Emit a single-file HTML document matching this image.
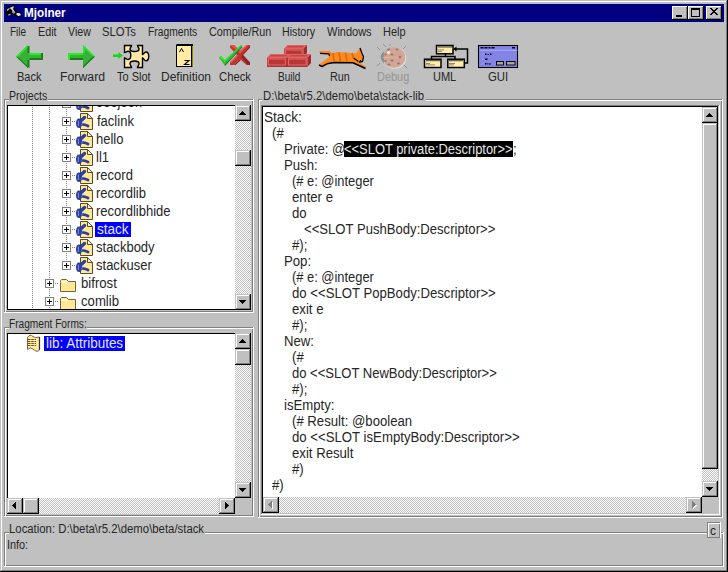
<!DOCTYPE html>
<html><head><meta charset="utf-8"><title>Mjolner</title>
<style>
html,body{margin:0;padding:0;}
body{width:728px;height:572px;overflow:hidden;position:relative;background:#c0c0c0;font-family:"Liberation Sans", sans-serif;}
body div, body svg{position:absolute;}
.t{white-space:pre;font-family:"Liberation Sans", sans-serif;}
svg{overflow:visible;}
</style></head><body>
<div style="left:0px;top:0px;width:728px;height:572px;background:#c0c0c0;"></div>
<div style="left:1px;top:1px;width:726px;height:1px;background:#fff;"></div>
<div style="left:1px;top:1px;width:1px;height:570px;background:#fff;"></div>
<div style="left:0px;top:571px;width:728px;height:1px;background:#000;"></div>
<div style="left:727px;top:0px;width:1px;height:572px;background:#000;"></div>
<div style="left:1px;top:570px;width:726px;height:1px;background:#808080;"></div>
<div style="left:726px;top:1px;width:1px;height:570px;background:#808080;"></div>
<div style="left:4px;top:4px;width:720px;height:18px;background:#000080;"></div>
<div class="t" style="left:24.02px;top:7px;font-size:12px;line-height:12px;color:#fff;font-weight:bold;transform:scaleX(0.9756);transform-origin:0 0;">Mjolner</div>
<div style="left:672px;top:6px;width:16px;height:14px;background:#c0c0c0;"></div>
<div style="left:672px;top:6px;width:16px;height:1px;background:#fff;"></div>
<div style="left:672px;top:6px;width:1px;height:14px;background:#fff;"></div>
<div style="left:672px;top:19px;width:16px;height:1px;background:#000;"></div>
<div style="left:687px;top:6px;width:1px;height:14px;background:#000;"></div>
<div style="left:673px;top:18px;width:14px;height:1px;background:#808080;"></div>
<div style="left:686px;top:7px;width:1px;height:12px;background:#808080;"></div>
<div style="left:688px;top:6px;width:16px;height:14px;background:#c0c0c0;"></div>
<div style="left:688px;top:6px;width:16px;height:1px;background:#fff;"></div>
<div style="left:688px;top:6px;width:1px;height:14px;background:#fff;"></div>
<div style="left:688px;top:19px;width:16px;height:1px;background:#000;"></div>
<div style="left:703px;top:6px;width:1px;height:14px;background:#000;"></div>
<div style="left:689px;top:18px;width:14px;height:1px;background:#808080;"></div>
<div style="left:702px;top:7px;width:1px;height:12px;background:#808080;"></div>
<div style="left:706px;top:6px;width:16px;height:14px;background:#c0c0c0;"></div>
<div style="left:706px;top:6px;width:16px;height:1px;background:#fff;"></div>
<div style="left:706px;top:6px;width:1px;height:14px;background:#fff;"></div>
<div style="left:706px;top:19px;width:16px;height:1px;background:#000;"></div>
<div style="left:721px;top:6px;width:1px;height:14px;background:#000;"></div>
<div style="left:707px;top:18px;width:14px;height:1px;background:#808080;"></div>
<div style="left:720px;top:7px;width:1px;height:12px;background:#808080;"></div>
<div style="left:676px;top:15px;width:6px;height:2px;background:#000;"></div>
<div style="left:691px;top:8px;width:9px;height:1px;background:#000;"></div>
<div style="left:691px;top:8px;width:1px;height:9px;background:#000;"></div>
<div style="left:691px;top:16px;width:9px;height:1px;background:#000;"></div>
<div style="left:699px;top:8px;width:1px;height:9px;background:#000;"></div>
<div style="left:691px;top:9px;width:9px;height:1px;background:#000;"></div>
<svg style="left:710px;top:8px" width="8" height="7"><path d="M0 0h2v1h1v1h2v-1h1v-1h2v1h-1v1h-1v1h-1v1h1v1h1v1h1v1h-2v-1h-1v-1h-2v1h-1v1h-2v-1h1v-1h1v-1h1v-1h-1v-1h-1v-1h-1z" fill="#000"/></svg>
<div class="t" style="left:10.17px;top:26px;font-size:12px;line-height:12px;color:#262626;transform:scaleX(0.8333);transform-origin:0 0;">File</div>
<div class="t" style="left:38.11px;top:26px;font-size:12px;line-height:12px;color:#262626;transform:scaleX(0.8947);transform-origin:0 0;">Edit</div>
<div class="t" style="left:68.00px;top:26px;font-size:12px;line-height:12px;color:#262626;transform:scaleX(0.8846);transform-origin:0 0;">View</div>
<div class="t" style="left:102.06px;top:26px;font-size:12px;line-height:12px;color:#262626;transform:scaleX(0.9429);transform-origin:0 0;">SLOTs</div>
<div class="t" style="left:148.14px;top:26px;font-size:12px;line-height:12px;color:#262626;transform:scaleX(0.8571);transform-origin:0 0;">Fragments</div>
<div class="t" style="left:209.10px;top:26px;font-size:12px;line-height:12px;color:#262626;transform:scaleX(0.8971);transform-origin:0 0;">Compile/Run</div>
<div class="t" style="left:282.11px;top:26px;font-size:12px;line-height:12px;color:#262626;transform:scaleX(0.8889);transform-origin:0 0;">History</div>
<div class="t" style="left:327.00px;top:26px;font-size:12px;line-height:12px;color:#262626;transform:scaleX(0.9167);transform-origin:0 0;">Windows</div>
<div class="t" style="left:383.09px;top:26px;font-size:12px;line-height:12px;color:#262626;transform:scaleX(0.9130);transform-origin:0 0;">Help</div>
<div class="t" style="left:17.08px;top:71px;font-size:12px;line-height:12px;color:#262626;transform:scaleX(0.9200);transform-origin:0 0;">Back</div>
<div class="t" style="left:59.98px;top:71px;font-size:12px;line-height:12px;color:#262626;transform:scaleX(1.0238);transform-origin:0 0;">Forward</div>
<div class="t" style="left:117.00px;top:71px;font-size:12px;line-height:12px;color:#262626;transform:scaleX(0.9167);transform-origin:0 0;">To Slot</div>
<div class="t" style="left:161.00px;top:71px;font-size:12px;line-height:12px;color:#262626;">Definition</div>
<div class="t" style="left:219.06px;top:71px;font-size:12px;line-height:12px;color:#262626;transform:scaleX(0.9394);transform-origin:0 0;">Check</div>
<div class="t" style="left:278.16px;top:71px;font-size:12px;line-height:12px;color:#262626;transform:scaleX(0.8400);transform-origin:0 0;">Build</div>
<div class="t" style="left:330.10px;top:71px;font-size:12px;line-height:12px;color:#262626;transform:scaleX(0.9000);transform-origin:0 0;">Run</div>
<div class="t" style="left:377.09px;top:71px;font-size:12px;line-height:12px;color:#959595;transform:scaleX(0.9118);transform-origin:0 0;">Debug</div>
<div class="t" style="left:433.08px;top:71px;font-size:12px;line-height:12px;color:#262626;transform:scaleX(0.9167);transform-origin:0 0;">UML</div>
<div class="t" style="left:488.05px;top:71px;font-size:12px;line-height:12px;color:#262626;transform:scaleX(0.9474);transform-origin:0 0;">GUI</div>
<svg style="left:0;top:0" width="728" height="100" viewBox="0 0 728 100">
<!-- Back arrow -->
<g>
<polygon points="16,56.5 28,45 28,53 43,53 43,60 28,60 28,68" fill="#36b236"/>
<polygon points="16,56.5 28,45 28,47.2 18.3,56.5" fill="#22f022"/>
<polygon points="29.5,53 43,53 43,55 29.5,55" fill="#22f022"/>
<polygon points="27.5,46.5 29.5,45.8 29.5,53 27.5,53" fill="#1f7a1f"/>
<polygon points="27.5,60 29.5,60 29.5,68 27.5,67" fill="#1f7a1f"/>
<polygon points="41,53 43,53 43,60 41,60" fill="#1f7a1f"/>
<polygon points="29.5,58 43,58 43,60 29.5,60" fill="#1f7a1f"/>
<polygon points="16.5,57 18,57 28,66.5 28,68" fill="#1f7a1f"/>
</g>
<!-- Forward arrow -->
<g>
<polygon points="68,53 83,53 83,45 95,56.5 83,68 83,60 68,60" fill="#36b236"/>
<polygon points="68,53 83,53 83,55 70,55 70,60 68,60" fill="#22f022"/>
<polygon points="83,45 84.8,46.7 84.8,53 83,53" fill="#22f022"/>
<polygon points="84.8,46.7 95,56.5 93,56.5 84.8,48.8" fill="#22f022"/>
<polygon points="70,58 83,58 83,60 70,60" fill="#1f7a1f"/>
<polygon points="83,66 93.2,56.5 95,56.5 83,68" fill="#1f7a1f"/>
</g>
<!-- To Slot -->
<g>
<polygon points="113,54 118.5,54 118.5,52 123,55.5 118.5,59 118.5,57 113,57" fill="#20d020"/>
<polygon points="113,54 118.5,54 118.5,55 113,55" fill="#30f030"/>
<path d="M124.5,45.5 H131.5 C131.5,47 130,47.5 130,49 C130,51 132,51.5 134.5,51.5 C137,51.5 139,51 139,49 C139,47.5 137.5,47 137.5,45.5 H142.5 V54.5 C144,54.5 144,52 146,52 C148,52 148.7,54 148.7,56.3 C148.7,58.6 148,60.8 146,60.8 C144,60.8 144,58 142.5,58 V67.5 H137.5 C137.5,66 139,65.5 139,63.5 C139,61.5 137,61 134.5,61 C132,61 130,61.5 130,63.5 C130,65.5 131.5,66 131.5,67.5 H124.5 V58 C126,58 126.5,59.5 128,59.5 C130,59.5 130.8,57.5 130.8,55.3 C130.8,53 130,51.2 128,51.2 C126.5,51.2 126,52.5 124.5,52.5 Z" fill="#feeaa6" stroke="#000" stroke-width="1.4"/>
</g>
<!-- Definition book -->
<g>
<path d="M176,45 L177,44 H193 V66 L192,67 H176 Z" fill="#000"/>
<rect x="177" y="46" width="14" height="20" fill="#ffeba3"/>
<rect x="192" y="46" width="1" height="20" fill="#8a8a00"/>
<path d="M179.5,52 L181.5,48.5 L183.5,52" fill="none" stroke="#000" stroke-width="1"/>
<path d="M184.5,60.5 H189 L184.5,64.5 H189.5" fill="none" stroke="#000" stroke-width="1.1"/>
</g>
<!-- Check -->
<g>
<polygon points="230,45 234,45 240,51 246.5,45 250,45 250,47.5 243,55 250,62.5 250,65 246.5,65 240,59 234,65 230,65 230,62.5 237,55 230,47.5" fill="#be3434"/>
<polygon points="230,45 234,45 240,51 246.5,45 248.5,45 240,53.5 231,45.8 230,47.5" fill="#f04c4c"/>
<polygon points="230,62.5 237,55 238,56 231.5,63" fill="#f04c4c"/>
<polygon points="250,45 250,47.5 243,55 250,62.5 250,65 248,65 241.5,57.5 242,55 249,47" fill="#8e2222"/>
<polygon points="234,65 240,59 241,60 235.5,65" fill="#8e2222"/>
<polygon points="219,57.5 221,56 224.5,60.5 241,45 242.2,46.2 224.5,65" fill="#30b830"/>
<polygon points="219,57 221,55.8 224.3,59.8 223.5,61" fill="#22ee22"/>
<polygon points="223.5,61.5 241,45 241.6,45.6 224.3,62.5" fill="#22ee22"/>
<polygon points="224.5,65 242.2,46.2 242.2,47.6 225,66" fill="#1a701a"/>
</g>
<!-- Build bricks -->
<g>
<polygon points="284,48.5 287.5,45 307,45 303.5,48.5" fill="#e66262"/>
<polygon points="286,47.5 288,46 304,46 302.5,47.5" fill="#c44444"/>
<polygon points="303.5,48.5 307,45 307,53 303.5,56.5" fill="#a22a2a"/>
<rect x="284" y="48.5" width="19.5" height="8" fill="#cc4444"/>
<rect x="285.5" y="50" width="16.5" height="5" fill="#b83636" stroke="#e86464" stroke-width="1"/>
<rect x="284" y="55.8" width="19.5" height="0.9" fill="#982424"/>
<polygon points="267,57.5 270.5,54 290.5,54 287,57.5" fill="#e66262"/>
<polygon points="269,56.5 271,55 287.5,55 286,56.5" fill="#c44444"/>
<rect x="267" y="57.5" width="20" height="9.2" fill="#cc4444"/>
<rect x="268.5" y="59" width="17" height="6" fill="#b83636" stroke="#e86464" stroke-width="1"/>
<polygon points="287,57.5 290.5,54 311,54 307.5,57.5" fill="#e66262"/>
<polygon points="289,56.5 291,55 308,55 306.5,56.5" fill="#c44444"/>
<polygon points="307.5,57.5 311,54 311,63 307.5,66.7" fill="#a22a2a"/>
<rect x="287" y="57.5" width="20.5" height="9.2" fill="#cc4444"/>
<rect x="288.5" y="59" width="17.5" height="6" fill="#b83636" stroke="#e86464" stroke-width="1"/>
<rect x="267" y="65.8" width="40.5" height="0.9" fill="#982424"/>
<line x1="287" y1="57.5" x2="287" y2="66.5" stroke="#982424" stroke-width="1"/>
</g>
<!-- Run cat -->
<g>
<polygon points="319,51 330,51 332,53.3 337,52 348,52.8 356,53.2 360,48 362,53.5 363.5,56.5 362.6,61.5 359,62 366,67 365.5,68.5 353,62.5 334,62 327,63.5 322,66.5 319,64.5 328.5,57.5 329.5,55 320,53.5" fill="#ff8a1c"/>
<g fill="none" stroke="#000" stroke-linejoin="round">
<polyline points="320,53.3 329,53.8 329.6,56" stroke-width="1.2"/>
<polyline points="319,65 322,66.5 327,63.8 334,62.5 353,62.8 365.5,68.5" stroke-width="1.5"/>
<polyline points="360,48 362,53.5 363.5,56.5 362.6,61.5 359,62" stroke-width="1.3"/>
<polyline points="353.5,58 358.5,61.5" stroke-width="1.1"/>
</g>
<path d="M333,53 L334,61.5 M339,52.3 L340.5,62 M345.5,52.6 L347,62 M352,53 L353.5,58" stroke="#d86a10" stroke-width="1.7"/>
<rect x="360" y="60" width="1.2" height="1.2" fill="#000"/>
</g>
<!-- Debug ladybug (disabled) -->
<g>
<line x1="386" y1="47" x2="383" y2="44" stroke="#909090" stroke-width="1"/>
<line x1="380" y1="50" x2="377" y2="47" stroke="#909090" stroke-width="1"/>
<line x1="380" y1="63" x2="377" y2="66" stroke="#909090" stroke-width="1"/>
<line x1="403" y1="49" x2="406" y2="46" stroke="#909090" stroke-width="1"/>
<line x1="404" y1="65" x2="407" y2="68" stroke="#909090" stroke-width="1"/>
<line x1="390" y1="46" x2="390" y2="44" stroke="#909090" stroke-width="1"/>
<ellipse cx="394.8" cy="58" rx="11.5" ry="10.8" fill="#dcdcdc"/>
<ellipse cx="394" cy="57.3" rx="11.2" ry="10.4" fill="#d4a494"/>
<path d="M384,51 Q377,57 384,63.5 Z" fill="#909090"/>
<line x1="383" y1="57.5" x2="405" y2="57.5" stroke="#e0b090" stroke-width="1"/>
<circle cx="388.5" cy="52.5" r="1.5" fill="#f0f0e8"/>
<g fill="#808080">
<ellipse cx="388.5" cy="49.5" rx="1.6" ry="0.9"/>
<ellipse cx="397" cy="49.5" rx="1.4" ry="0.9"/>
<ellipse cx="385.5" cy="54.5" rx="1.2" ry="1"/>
<ellipse cx="392" cy="54.5" rx="1.6" ry="1"/>
<ellipse cx="400" cy="57" rx="1.4" ry="1.2"/>
<ellipse cx="385.5" cy="61" rx="1.2" ry="1"/>
<ellipse cx="392" cy="60.5" rx="1.6" ry="1"/>
<ellipse cx="389" cy="64.5" rx="1.6" ry="0.9"/>
<ellipse cx="398.5" cy="63.5" rx="1.5" ry="0.9"/>
</g>
</g>
<!-- UML -->
<g stroke="#000" stroke-width="1.5" fill="#ffeca6">
<path d="M445.5,54 V56.5 M431.5,59 V56.5 H455 V59" fill="none"/>
<path d="M464,63 H467.5 V49 H454" fill="none"/>
<rect x="436.5" y="45.5" width="16.5" height="8.3"/>
<rect x="424.5" y="59.2" width="16.5" height="8.3"/>
<rect x="447.8" y="59.2" width="16.5" height="8.3"/>
</g>
<polygon points="453.5,49 456.5,46.5 456.5,51.5" fill="#000"/>
<g fill="#707070">
<rect x="438" y="46.5" width="14" height="1" fill="#404040"/>
<rect x="438" y="49.5" width="6" height="0.8"/><rect x="438" y="51" width="4" height="0.8"/>
<rect x="426" y="60.2" width="14" height="1" fill="#404040"/>
<rect x="426" y="63" width="4" height="0.8"/><rect x="426" y="64.5" width="9" height="0.8"/>
<rect x="449" y="60.2" width="14" height="1" fill="#404040"/>
<rect x="449" y="63" width="6" height="0.8"/><rect x="449" y="64.5" width="5" height="0.8"/>
</g>
<!-- GUI -->
<g>
<rect x="478.5" y="45.5" width="39" height="22" fill="#8484e6" stroke="#000" stroke-width="1.1"/>
<rect x="479.5" y="49.8" width="38" height="0.9" fill="#b0b0ff"/>
<g fill="#000">
<rect x="480.5" y="47" width="3" height="1.5"/><rect x="484.5" y="47" width="3" height="1.5"/><rect x="488.5" y="47" width="2" height="1.5"/><rect x="491.5" y="47" width="3" height="1.5"/><rect x="512" y="47" width="3" height="1.5"/>
<rect x="485" y="53.5" width="1.5" height="1.5"/><rect x="487.5" y="54" width="1.5" height="0.8"/><rect x="490" y="53.5" width="1.5" height="1.5"/>
<rect x="485" y="58.5" width="2.5" height="1.5"/>
<rect x="485" y="63" width="1.5" height="1.5"/><rect x="487.5" y="63" width="0.8" height="1.5"/><rect x="489" y="63.5" width="2" height="1"/>
</g>
<g fill="none" stroke="#a8a8f0" stroke-width="0.9">
<path d="M481.5,55 L483.5,53.5"/><path d="M481.5,60 L483.5,58.5"/><path d="M481.5,64.5 L483.5,63"/>
</g>
<rect x="496.5" y="61.5" width="7" height="3.5" fill="#a8a890" stroke="#000" stroke-width="0.9"/>
<rect x="506.5" y="61.5" width="8.5" height="3.5" fill="#a8a890" stroke="#000" stroke-width="0.9"/>
</g>
<!-- title icon -->
<g>
<polygon points="6,9.5 9,7 12.5,5.5 15,5.5 14.5,8.5 17.5,12 20.5,12.5 22,15.5 19,17 16.5,16.5 14,14.5 11,15 7.5,16.5 6,14" fill="#000"/>
<polygon points="7,9.5 9.5,8 9.5,9 7.5,11" fill="#e0e0e0"/>
<polygon points="9.5,8 12.5,6.5 14,6.5 13,9 15.5,12.5 13.5,13 11.5,9.5" fill="#d8d8d8"/>
<polygon points="12.5,10 15,12.5 14,14 12,13" fill="#909090"/>
<polygon points="8,14.5 10.5,13.5 10.5,15 8.5,15.8" fill="#a0a0a0"/>
<polygon points="16.5,13 20,13.3 21,15.3 18.5,16 16.5,15" fill="#e8e8e8"/>
</g>
</svg>

<div style="left:4px;top:99px;width:249px;height:1px;background:#808080;"></div>
<div style="left:4px;top:99px;width:1px;height:213px;background:#808080;"></div>
<div style="left:4px;top:311px;width:249px;height:1px;background:#808080;"></div>
<div style="left:252px;top:99px;width:1px;height:213px;background:#808080;"></div>
<div style="left:5px;top:100px;width:249px;height:1px;background:#fff;"></div>
<div style="left:5px;top:100px;width:1px;height:213px;background:#fff;"></div>
<div style="left:4px;top:312px;width:250px;height:1px;background:#fff;"></div>
<div style="left:253px;top:99px;width:1px;height:214px;background:#fff;"></div>
<div style="left:9px;top:99px;width:39px;height:2px;background:#c0c0c0;"></div>
<div class="t" style="left:9.12px;top:90px;font-size:12px;line-height:12px;color:#262626;transform:scaleX(0.8810);transform-origin:0 0;">Projects</div>
<div style="left:8px;top:106px;width:243px;height:203px;background:#fff;"></div>
<div style="left:7px;top:105px;width:244px;height:1px;background:#000;"></div>
<div style="left:7px;top:105px;width:1px;height:205px;background:#000;"></div>
<div style="left:7px;top:309px;width:244px;height:1px;background:#000;"></div>
<div style="left:8px;top:106px;width:227px;height:203px;overflow:hidden;">
<svg style="left:0;top:0" width="227" height="203"><path fill="#808080" d="M24 1h1v1h-1zM24 3h1v1h-1zM24 5h1v1h-1zM24 7h1v1h-1zM24 9h1v1h-1zM24 11h1v1h-1zM24 13h1v1h-1zM24 15h1v1h-1zM24 17h1v1h-1zM24 19h1v1h-1zM24 21h1v1h-1zM24 23h1v1h-1zM24 25h1v1h-1zM24 27h1v1h-1zM24 29h1v1h-1zM24 31h1v1h-1zM24 33h1v1h-1zM24 35h1v1h-1zM24 37h1v1h-1zM24 39h1v1h-1zM24 41h1v1h-1zM24 43h1v1h-1zM24 45h1v1h-1zM24 47h1v1h-1zM24 49h1v1h-1zM24 51h1v1h-1zM24 53h1v1h-1zM24 55h1v1h-1zM24 57h1v1h-1zM24 59h1v1h-1zM24 61h1v1h-1zM24 63h1v1h-1zM24 65h1v1h-1zM24 67h1v1h-1zM24 69h1v1h-1zM24 71h1v1h-1zM24 73h1v1h-1zM24 75h1v1h-1zM24 77h1v1h-1zM24 79h1v1h-1zM24 81h1v1h-1zM24 83h1v1h-1zM24 85h1v1h-1zM24 87h1v1h-1zM24 89h1v1h-1zM24 91h1v1h-1zM24 93h1v1h-1zM24 95h1v1h-1zM24 97h1v1h-1zM24 99h1v1h-1zM24 101h1v1h-1zM24 103h1v1h-1zM24 105h1v1h-1zM24 107h1v1h-1zM24 109h1v1h-1zM24 111h1v1h-1zM24 113h1v1h-1zM24 115h1v1h-1zM24 117h1v1h-1zM24 119h1v1h-1zM24 121h1v1h-1zM24 123h1v1h-1zM24 125h1v1h-1zM24 127h1v1h-1zM24 129h1v1h-1zM24 131h1v1h-1zM24 133h1v1h-1zM24 135h1v1h-1zM24 137h1v1h-1zM24 139h1v1h-1zM24 141h1v1h-1zM24 143h1v1h-1zM24 145h1v1h-1zM24 147h1v1h-1zM24 149h1v1h-1zM24 151h1v1h-1zM24 153h1v1h-1zM24 155h1v1h-1zM24 157h1v1h-1zM24 159h1v1h-1zM24 161h1v1h-1zM24 163h1v1h-1zM24 165h1v1h-1zM24 167h1v1h-1zM24 169h1v1h-1zM24 171h1v1h-1zM24 173h1v1h-1zM24 175h1v1h-1zM24 177h1v1h-1zM24 179h1v1h-1zM24 181h1v1h-1zM24 183h1v1h-1zM24 185h1v1h-1zM24 187h1v1h-1zM24 189h1v1h-1zM24 191h1v1h-1zM24 193h1v1h-1zM24 195h1v1h-1zM24 197h1v1h-1zM24 199h1v1h-1zM24 201h1v1h-1zM24 203h1v1h-1zM41 1h1v1h-1zM41 3h1v1h-1zM41 5h1v1h-1zM41 7h1v1h-1zM41 9h1v1h-1zM41 11h1v1h-1zM41 13h1v1h-1zM41 15h1v1h-1zM41 17h1v1h-1zM41 19h1v1h-1zM41 21h1v1h-1zM41 23h1v1h-1zM41 25h1v1h-1zM41 27h1v1h-1zM41 29h1v1h-1zM41 31h1v1h-1zM41 33h1v1h-1zM41 35h1v1h-1zM41 37h1v1h-1zM41 39h1v1h-1zM41 41h1v1h-1zM41 43h1v1h-1zM41 45h1v1h-1zM41 47h1v1h-1zM41 49h1v1h-1zM41 51h1v1h-1zM41 53h1v1h-1zM41 55h1v1h-1zM41 57h1v1h-1zM41 59h1v1h-1zM41 61h1v1h-1zM41 63h1v1h-1zM41 65h1v1h-1zM41 67h1v1h-1zM41 69h1v1h-1zM41 71h1v1h-1zM41 73h1v1h-1zM41 75h1v1h-1zM41 77h1v1h-1zM41 79h1v1h-1zM41 81h1v1h-1zM41 83h1v1h-1zM41 85h1v1h-1zM41 87h1v1h-1zM41 89h1v1h-1zM41 91h1v1h-1zM41 93h1v1h-1zM41 95h1v1h-1zM41 97h1v1h-1zM41 99h1v1h-1zM41 101h1v1h-1zM41 103h1v1h-1zM41 105h1v1h-1zM41 107h1v1h-1zM41 109h1v1h-1zM41 111h1v1h-1zM41 113h1v1h-1zM41 115h1v1h-1zM41 117h1v1h-1zM41 119h1v1h-1zM41 121h1v1h-1zM41 123h1v1h-1zM41 125h1v1h-1zM41 127h1v1h-1zM41 129h1v1h-1zM41 131h1v1h-1zM41 133h1v1h-1zM41 135h1v1h-1zM41 137h1v1h-1zM41 139h1v1h-1zM41 141h1v1h-1zM41 143h1v1h-1zM41 145h1v1h-1zM41 147h1v1h-1zM41 149h1v1h-1zM41 151h1v1h-1zM41 153h1v1h-1zM41 155h1v1h-1zM41 157h1v1h-1zM41 159h1v1h-1zM41 161h1v1h-1zM41 163h1v1h-1zM41 165h1v1h-1zM41 167h1v1h-1zM41 169h1v1h-1zM41 171h1v1h-1zM41 173h1v1h-1zM41 175h1v1h-1zM41 177h1v1h-1zM41 179h1v1h-1zM41 181h1v1h-1zM41 183h1v1h-1zM41 185h1v1h-1zM41 187h1v1h-1zM41 189h1v1h-1zM41 191h1v1h-1zM41 193h1v1h-1zM41 195h1v1h-1zM41 197h1v1h-1zM41 199h1v1h-1zM41 201h1v1h-1zM41 203h1v1h-1zM58 1h1v1h-1zM58 3h1v1h-1zM58 5h1v1h-1zM58 7h1v1h-1zM58 9h1v1h-1zM58 11h1v1h-1zM58 13h1v1h-1zM58 15h1v1h-1zM58 17h1v1h-1zM58 19h1v1h-1zM58 21h1v1h-1zM58 23h1v1h-1zM58 25h1v1h-1zM58 27h1v1h-1zM58 29h1v1h-1zM58 31h1v1h-1zM58 33h1v1h-1zM58 35h1v1h-1zM58 37h1v1h-1zM58 39h1v1h-1zM58 41h1v1h-1zM58 43h1v1h-1zM58 45h1v1h-1zM58 47h1v1h-1zM58 49h1v1h-1zM58 51h1v1h-1zM58 53h1v1h-1zM58 55h1v1h-1zM58 57h1v1h-1zM58 59h1v1h-1zM58 61h1v1h-1zM58 63h1v1h-1zM58 65h1v1h-1zM58 67h1v1h-1zM58 69h1v1h-1zM58 71h1v1h-1zM58 73h1v1h-1zM58 75h1v1h-1zM58 77h1v1h-1zM58 79h1v1h-1zM58 81h1v1h-1zM58 83h1v1h-1zM58 85h1v1h-1zM58 87h1v1h-1zM58 89h1v1h-1zM58 91h1v1h-1zM58 93h1v1h-1zM58 95h1v1h-1zM58 97h1v1h-1zM58 99h1v1h-1zM58 101h1v1h-1zM58 103h1v1h-1zM58 105h1v1h-1zM58 107h1v1h-1zM58 109h1v1h-1zM58 111h1v1h-1zM58 113h1v1h-1zM58 115h1v1h-1zM58 117h1v1h-1zM58 119h1v1h-1zM58 121h1v1h-1zM58 123h1v1h-1zM58 125h1v1h-1zM58 127h1v1h-1zM58 129h1v1h-1zM58 131h1v1h-1zM58 133h1v1h-1zM58 135h1v1h-1zM58 137h1v1h-1zM58 139h1v1h-1zM58 141h1v1h-1zM58 143h1v1h-1zM58 145h1v1h-1zM58 147h1v1h-1zM58 149h1v1h-1zM58 151h1v1h-1zM58 153h1v1h-1zM58 155h1v1h-1zM58 157h1v1h-1zM58 159h1v1h-1zM64 -3h1v1h-1zM66 -3h1v1h-1zM64 15h1v1h-1zM66 15h1v1h-1zM64 33h1v1h-1zM66 33h1v1h-1zM64 51h1v1h-1zM66 51h1v1h-1zM64 69h1v1h-1zM66 69h1v1h-1zM64 87h1v1h-1zM66 87h1v1h-1zM64 105h1v1h-1zM66 105h1v1h-1zM64 123h1v1h-1zM66 123h1v1h-1zM64 141h1v1h-1zM66 141h1v1h-1zM64 159h1v1h-1zM66 159h1v1h-1zM47 177h1v1h-1zM49 177h1v1h-1zM47 195h1v1h-1zM49 195h1v1h-1z"/></svg>
<div style="left:54px;top:-7px;width:7px;height:7px;border:1px solid #808080;background:#fff"></div>
<div style="left:56px;top:-3px;width:5px;height:1px;background:#000"></div>
<div style="left:58px;top:-5px;width:1px;height:5px;background:#000"></div>
<svg style="left:0;top:0" width="227" height="203" viewBox="8 0 227 203"><path d="M80.5,-10.50 H87.5 L92.5,-5.50 V5.50 H80.5 Z" fill="#ffe994" stroke="#5a4a2a" stroke-width="1"/><path d="M87.5,-10.50 V-5.50 H92.5 Z" fill="#fff6cc" stroke="#5a4a2a" stroke-width="1"/><ellipse cx="79" cy="-0.80" rx="3" ry="4.8" fill="#2c3fa0"/><path d="M79.5,-2.00 L84.5,-6.50" stroke="#2c3fa0" stroke-width="3.4" stroke-linecap="round"/><path d="M80.5,0.50 Q84,0.00 88,2.00" fill="none" stroke="#2c3fa0" stroke-width="2.8" stroke-linecap="round"/><path d="M78.4,-3.50 V2.00" stroke="#b0b8e8" stroke-width="0.7"/><path d="M81.3,1.50 L83.3,-2.50" stroke="#a0a8d8" stroke-width="0.5"/></svg>
<div class="t" style="left:88.08px;top:-11px;font-size:14px;line-height:14px;color:#262626;transform:scaleX(0.9250);transform-origin:0 0;">ooojoon</div>
<div style="left:54px;top:11px;width:7px;height:7px;border:1px solid #808080;background:#fff"></div>
<div style="left:56px;top:15px;width:5px;height:1px;background:#000"></div>
<div style="left:58px;top:13px;width:1px;height:5px;background:#000"></div>
<svg style="left:0;top:0" width="227" height="203" viewBox="8 0 227 203"><path d="M80.5,7.50 H87.5 L92.5,12.50 V23.50 H80.5 Z" fill="#ffe994" stroke="#5a4a2a" stroke-width="1"/><path d="M87.5,7.50 V12.50 H92.5 Z" fill="#fff6cc" stroke="#5a4a2a" stroke-width="1"/><ellipse cx="79" cy="17.20" rx="3" ry="4.8" fill="#2c3fa0"/><path d="M79.5,16.00 L84.5,11.50" stroke="#2c3fa0" stroke-width="3.4" stroke-linecap="round"/><path d="M80.5,18.50 Q84,18.00 88,20.00" fill="none" stroke="#2c3fa0" stroke-width="2.8" stroke-linecap="round"/><path d="M78.4,14.50 V20.00" stroke="#b0b8e8" stroke-width="0.7"/><path d="M81.3,19.50 L83.3,15.50" stroke="#a0a8d8" stroke-width="0.5"/></svg>
<div class="t" style="left:89.30px;top:8px;font-size:14px;line-height:14px;color:#262626;transform:scaleX(0.9300);transform-origin:0 0;">faclink</div>
<div style="left:54px;top:29px;width:7px;height:7px;border:1px solid #808080;background:#fff"></div>
<div style="left:56px;top:33px;width:5px;height:1px;background:#000"></div>
<div style="left:58px;top:31px;width:1px;height:5px;background:#000"></div>
<svg style="left:0;top:0" width="227" height="203" viewBox="8 0 227 203"><path d="M80.5,25.50 H87.5 L92.5,30.50 V41.50 H80.5 Z" fill="#ffe994" stroke="#5a4a2a" stroke-width="1"/><path d="M87.5,25.50 V30.50 H92.5 Z" fill="#fff6cc" stroke="#5a4a2a" stroke-width="1"/><ellipse cx="79" cy="35.20" rx="3" ry="4.8" fill="#2c3fa0"/><path d="M79.5,34.00 L84.5,29.50" stroke="#2c3fa0" stroke-width="3.4" stroke-linecap="round"/><path d="M80.5,36.50 Q84,36.00 88,38.00" fill="none" stroke="#2c3fa0" stroke-width="2.8" stroke-linecap="round"/><path d="M78.4,32.50 V38.00" stroke="#b0b8e8" stroke-width="0.7"/><path d="M81.3,37.50 L83.3,33.50" stroke="#a0a8d8" stroke-width="0.5"/></svg>
<div class="t" style="left:88.37px;top:26px;font-size:14px;line-height:14px;color:#262626;transform:scaleX(0.9300);transform-origin:0 0;">hello</div>
<div style="left:54px;top:47px;width:7px;height:7px;border:1px solid #808080;background:#fff"></div>
<div style="left:56px;top:51px;width:5px;height:1px;background:#000"></div>
<div style="left:58px;top:49px;width:1px;height:5px;background:#000"></div>
<svg style="left:0;top:0" width="227" height="203" viewBox="8 0 227 203"><path d="M80.5,43.50 H87.5 L92.5,48.50 V59.50 H80.5 Z" fill="#ffe994" stroke="#5a4a2a" stroke-width="1"/><path d="M87.5,43.50 V48.50 H92.5 Z" fill="#fff6cc" stroke="#5a4a2a" stroke-width="1"/><ellipse cx="79" cy="53.20" rx="3" ry="4.8" fill="#2c3fa0"/><path d="M79.5,52.00 L84.5,47.50" stroke="#2c3fa0" stroke-width="3.4" stroke-linecap="round"/><path d="M80.5,54.50 Q84,54.00 88,56.00" fill="none" stroke="#2c3fa0" stroke-width="2.8" stroke-linecap="round"/><path d="M78.4,50.50 V56.00" stroke="#b0b8e8" stroke-width="0.7"/><path d="M81.3,55.50 L83.3,51.50" stroke="#a0a8d8" stroke-width="0.5"/></svg>
<div class="t" style="left:88.37px;top:44px;font-size:14px;line-height:14px;color:#262626;transform:scaleX(0.9300);transform-origin:0 0;">ll1</div>
<div style="left:54px;top:65px;width:7px;height:7px;border:1px solid #808080;background:#fff"></div>
<div style="left:56px;top:69px;width:5px;height:1px;background:#000"></div>
<div style="left:58px;top:67px;width:1px;height:5px;background:#000"></div>
<svg style="left:0;top:0" width="227" height="203" viewBox="8 0 227 203"><path d="M80.5,61.50 H87.5 L92.5,66.50 V77.50 H80.5 Z" fill="#ffe994" stroke="#5a4a2a" stroke-width="1"/><path d="M87.5,61.50 V66.50 H92.5 Z" fill="#fff6cc" stroke="#5a4a2a" stroke-width="1"/><ellipse cx="79" cy="71.20" rx="3" ry="4.8" fill="#2c3fa0"/><path d="M79.5,70.00 L84.5,65.50" stroke="#2c3fa0" stroke-width="3.4" stroke-linecap="round"/><path d="M80.5,72.50 Q84,72.00 88,74.00" fill="none" stroke="#2c3fa0" stroke-width="2.8" stroke-linecap="round"/><path d="M78.4,68.50 V74.00" stroke="#b0b8e8" stroke-width="0.7"/><path d="M81.3,73.50 L83.3,69.50" stroke="#a0a8d8" stroke-width="0.5"/></svg>
<div class="t" style="left:88.37px;top:62px;font-size:14px;line-height:14px;color:#262626;transform:scaleX(0.9300);transform-origin:0 0;">record</div>
<div style="left:54px;top:83px;width:7px;height:7px;border:1px solid #808080;background:#fff"></div>
<div style="left:56px;top:87px;width:5px;height:1px;background:#000"></div>
<div style="left:58px;top:85px;width:1px;height:5px;background:#000"></div>
<svg style="left:0;top:0" width="227" height="203" viewBox="8 0 227 203"><path d="M80.5,79.50 H87.5 L92.5,84.50 V95.50 H80.5 Z" fill="#ffe994" stroke="#5a4a2a" stroke-width="1"/><path d="M87.5,79.50 V84.50 H92.5 Z" fill="#fff6cc" stroke="#5a4a2a" stroke-width="1"/><ellipse cx="79" cy="89.20" rx="3" ry="4.8" fill="#2c3fa0"/><path d="M79.5,88.00 L84.5,83.50" stroke="#2c3fa0" stroke-width="3.4" stroke-linecap="round"/><path d="M80.5,90.50 Q84,90.00 88,92.00" fill="none" stroke="#2c3fa0" stroke-width="2.8" stroke-linecap="round"/><path d="M78.4,86.50 V92.00" stroke="#b0b8e8" stroke-width="0.7"/><path d="M81.3,91.50 L83.3,87.50" stroke="#a0a8d8" stroke-width="0.5"/></svg>
<div class="t" style="left:88.37px;top:80px;font-size:14px;line-height:14px;color:#262626;transform:scaleX(0.9300);transform-origin:0 0;">recordlib</div>
<div style="left:54px;top:101px;width:7px;height:7px;border:1px solid #808080;background:#fff"></div>
<div style="left:56px;top:105px;width:5px;height:1px;background:#000"></div>
<div style="left:58px;top:103px;width:1px;height:5px;background:#000"></div>
<svg style="left:0;top:0" width="227" height="203" viewBox="8 0 227 203"><path d="M80.5,97.50 H87.5 L92.5,102.50 V113.50 H80.5 Z" fill="#ffe994" stroke="#5a4a2a" stroke-width="1"/><path d="M87.5,97.50 V102.50 H92.5 Z" fill="#fff6cc" stroke="#5a4a2a" stroke-width="1"/><ellipse cx="79" cy="107.20" rx="3" ry="4.8" fill="#2c3fa0"/><path d="M79.5,106.00 L84.5,101.50" stroke="#2c3fa0" stroke-width="3.4" stroke-linecap="round"/><path d="M80.5,108.50 Q84,108.00 88,110.00" fill="none" stroke="#2c3fa0" stroke-width="2.8" stroke-linecap="round"/><path d="M78.4,104.50 V110.00" stroke="#b0b8e8" stroke-width="0.7"/><path d="M81.3,109.50 L83.3,105.50" stroke="#a0a8d8" stroke-width="0.5"/></svg>
<div class="t" style="left:88.37px;top:98px;font-size:14px;line-height:14px;color:#262626;transform:scaleX(0.9300);transform-origin:0 0;">recordlibhide</div>
<div style="left:54px;top:119px;width:7px;height:7px;border:1px solid #808080;background:#fff"></div>
<div style="left:56px;top:123px;width:5px;height:1px;background:#000"></div>
<div style="left:58px;top:121px;width:1px;height:5px;background:#000"></div>
<svg style="left:0;top:0" width="227" height="203" viewBox="8 0 227 203"><path d="M80.5,115.50 H87.5 L92.5,120.50 V131.50 H80.5 Z" fill="#ffe994" stroke="#5a4a2a" stroke-width="1"/><path d="M87.5,115.50 V120.50 H92.5 Z" fill="#fff6cc" stroke="#5a4a2a" stroke-width="1"/><ellipse cx="79" cy="125.20" rx="3" ry="4.8" fill="#2c3fa0"/><path d="M79.5,124.00 L84.5,119.50" stroke="#2c3fa0" stroke-width="3.4" stroke-linecap="round"/><path d="M80.5,126.50 Q84,126.00 88,128.00" fill="none" stroke="#2c3fa0" stroke-width="2.8" stroke-linecap="round"/><path d="M78.4,122.50 V128.00" stroke="#b0b8e8" stroke-width="0.7"/><path d="M81.3,127.50 L83.3,123.50" stroke="#a0a8d8" stroke-width="0.5"/></svg>
<div style="left:87px;top:116px;width:36px;height:15px;background:#0000ff;"></div>
<div class="t" style="left:89.03px;top:116px;font-size:14px;line-height:14px;color:#e6e6e6;transform:scaleX(0.9677);transform-origin:0 0;">stack</div>
<div style="left:54px;top:137px;width:7px;height:7px;border:1px solid #808080;background:#fff"></div>
<div style="left:56px;top:141px;width:5px;height:1px;background:#000"></div>
<div style="left:58px;top:139px;width:1px;height:5px;background:#000"></div>
<svg style="left:0;top:0" width="227" height="203" viewBox="8 0 227 203"><path d="M80.5,133.50 H87.5 L92.5,138.50 V149.50 H80.5 Z" fill="#ffe994" stroke="#5a4a2a" stroke-width="1"/><path d="M87.5,133.50 V138.50 H92.5 Z" fill="#fff6cc" stroke="#5a4a2a" stroke-width="1"/><ellipse cx="79" cy="143.20" rx="3" ry="4.8" fill="#2c3fa0"/><path d="M79.5,142.00 L84.5,137.50" stroke="#2c3fa0" stroke-width="3.4" stroke-linecap="round"/><path d="M80.5,144.50 Q84,144.00 88,146.00" fill="none" stroke="#2c3fa0" stroke-width="2.8" stroke-linecap="round"/><path d="M78.4,140.50 V146.00" stroke="#b0b8e8" stroke-width="0.7"/><path d="M81.3,145.50 L83.3,141.50" stroke="#a0a8d8" stroke-width="0.5"/></svg>
<div class="t" style="left:88.37px;top:134px;font-size:14px;line-height:14px;color:#262626;transform:scaleX(0.9300);transform-origin:0 0;">stackbody</div>
<div style="left:54px;top:155px;width:7px;height:7px;border:1px solid #808080;background:#fff"></div>
<div style="left:56px;top:159px;width:5px;height:1px;background:#000"></div>
<div style="left:58px;top:157px;width:1px;height:5px;background:#000"></div>
<svg style="left:0;top:0" width="227" height="203" viewBox="8 0 227 203"><path d="M80.5,151.50 H87.5 L92.5,156.50 V167.50 H80.5 Z" fill="#ffe994" stroke="#5a4a2a" stroke-width="1"/><path d="M87.5,151.50 V156.50 H92.5 Z" fill="#fff6cc" stroke="#5a4a2a" stroke-width="1"/><ellipse cx="79" cy="161.20" rx="3" ry="4.8" fill="#2c3fa0"/><path d="M79.5,160.00 L84.5,155.50" stroke="#2c3fa0" stroke-width="3.4" stroke-linecap="round"/><path d="M80.5,162.50 Q84,162.00 88,164.00" fill="none" stroke="#2c3fa0" stroke-width="2.8" stroke-linecap="round"/><path d="M78.4,158.50 V164.00" stroke="#b0b8e8" stroke-width="0.7"/><path d="M81.3,163.50 L83.3,159.50" stroke="#a0a8d8" stroke-width="0.5"/></svg>
<div class="t" style="left:88.37px;top:152px;font-size:14px;line-height:14px;color:#262626;transform:scaleX(0.9300);transform-origin:0 0;">stackuser</div>
<div style="left:37px;top:173px;width:7px;height:7px;border:1px solid #808080;background:#fff"></div>
<div style="left:39px;top:177px;width:5px;height:1px;background:#000"></div>
<div style="left:41px;top:175px;width:1px;height:5px;background:#000"></div>
<svg style="left:0;top:0" width="227" height="203" viewBox="8 0 227 203"><path d="M60.5,176.5 V174.5 L61.5,173.5 H66.5 L68.5,175.5 H75.5 V185.5 H60.5 Z" fill="#ffe898" stroke="#7a6434" stroke-width="1"/><path d="M61.5,176 H67.5" stroke="#fff" stroke-width="1.2"/></svg>
<div class="t" style="left:72.56px;top:170px;font-size:14px;line-height:14px;color:#262626;transform:scaleX(0.9400);transform-origin:0 0;">bifrost</div>
<div style="left:37px;top:191px;width:7px;height:7px;border:1px solid #808080;background:#fff"></div>
<div style="left:39px;top:195px;width:5px;height:1px;background:#000"></div>
<div style="left:41px;top:193px;width:1px;height:5px;background:#000"></div>
<svg style="left:0;top:0" width="227" height="203" viewBox="8 0 227 203"><path d="M60.5,194.5 V192.5 L61.5,191.5 H66.5 L68.5,193.5 H75.5 V203.5 H60.5 Z" fill="#ffe898" stroke="#7a6434" stroke-width="1"/><path d="M61.5,194 H67.5" stroke="#fff" stroke-width="1.2"/></svg>
<div class="t" style="left:72.56px;top:188px;font-size:14px;line-height:14px;color:#262626;transform:scaleX(0.9400);transform-origin:0 0;">comlib</div>
</div>
<div style="left:235px;top:121px;width:16px;height:173px;background:repeating-conic-gradient(#fff 0 25%,#c0c0c0 0 50%) 0 0/2px 2px;"></div>
<div style="left:235px;top:105px;width:16px;height:16px;background:#c0c0c0;"></div>
<div style="left:235px;top:120px;width:16px;height:1px;background:#000;"></div>
<div style="left:250px;top:105px;width:1px;height:16px;background:#000;"></div>
<div style="left:236px;top:106px;width:13px;height:1px;background:#fff;"></div>
<div style="left:236px;top:106px;width:1px;height:13px;background:#fff;"></div>
<div style="left:236px;top:119px;width:14px;height:1px;background:#808080;"></div>
<div style="left:249px;top:106px;width:1px;height:14px;background:#808080;"></div>
<svg style="left:239px;top:111px" width="7" height="4"><path d="M3 0h1v1h1v1h1v1h1v1h-7v-1h1v-1h1v-1h1z" fill="#000"/></svg>
<div style="left:235px;top:150px;width:16px;height:16px;background:#c0c0c0;"></div>
<div style="left:235px;top:165px;width:16px;height:1px;background:#000;"></div>
<div style="left:250px;top:150px;width:1px;height:16px;background:#000;"></div>
<div style="left:236px;top:151px;width:13px;height:1px;background:#fff;"></div>
<div style="left:236px;top:151px;width:1px;height:13px;background:#fff;"></div>
<div style="left:236px;top:164px;width:14px;height:1px;background:#808080;"></div>
<div style="left:249px;top:151px;width:1px;height:14px;background:#808080;"></div>
<div style="left:235px;top:294px;width:16px;height:16px;background:#c0c0c0;"></div>
<div style="left:235px;top:309px;width:16px;height:1px;background:#000;"></div>
<div style="left:250px;top:294px;width:1px;height:16px;background:#000;"></div>
<div style="left:236px;top:295px;width:13px;height:1px;background:#fff;"></div>
<div style="left:236px;top:295px;width:1px;height:13px;background:#fff;"></div>
<div style="left:236px;top:308px;width:14px;height:1px;background:#808080;"></div>
<div style="left:249px;top:295px;width:1px;height:14px;background:#808080;"></div>
<svg style="left:239px;top:300px" width="7" height="4"><path d="M0 0h7v1h-1v1h-1v1h-1v1h-1v-1h-1v-1h-1v-1h-1z" fill="#000"/></svg>
<div style="left:4px;top:327px;width:249px;height:1px;background:#808080;"></div>
<div style="left:4px;top:327px;width:1px;height:189px;background:#808080;"></div>
<div style="left:4px;top:515px;width:249px;height:1px;background:#808080;"></div>
<div style="left:252px;top:327px;width:1px;height:189px;background:#808080;"></div>
<div style="left:5px;top:328px;width:249px;height:1px;background:#fff;"></div>
<div style="left:5px;top:328px;width:1px;height:189px;background:#fff;"></div>
<div style="left:4px;top:516px;width:250px;height:1px;background:#fff;"></div>
<div style="left:253px;top:327px;width:1px;height:190px;background:#fff;"></div>
<div style="left:9px;top:327px;width:78px;height:2px;background:#c0c0c0;"></div>
<div class="t" style="left:9.16px;top:318px;font-size:12px;line-height:12px;color:#262626;transform:scaleX(0.8444);transform-origin:0 0;">Fragment Forms:</div>
<div style="left:8px;top:334px;width:243px;height:180px;background:#fff;"></div>
<div style="left:7px;top:333px;width:244px;height:1px;background:#000;"></div>
<div style="left:7px;top:333px;width:1px;height:181px;background:#000;"></div>
<div style="left:44px;top:336px;width:81px;height:15px;background:#0000ff;"></div>
<div class="t" style="left:46.04px;top:336px;font-size:14px;line-height:14px;color:#e6e6e6;transform:scaleX(0.9620);transform-origin:0 0;">lib: Attributes</div>
<svg style="left:0;top:0" width="728" height="572"><path d="M27.5,337.5 Q30,333.5 33,336.5 Q35,338.5 39.5,337 V350 Q37,353 33,349 Q30.5,346.5 27.5,349.5 Z" fill="#ffe8a0" stroke="#7a6434" stroke-width="1"/><path d="M39.5,337 V350" stroke="#303040" stroke-width="1.2"/><g stroke="#504020" stroke-width="0.9" stroke-dasharray="2.5 0.8"><path d="M28,339.5 H36 M28,341.5 H36 M28,343.5 H36 M28,345.5 H36"/></g></svg>
<div style="left:235px;top:349px;width:16px;height:133px;background:repeating-conic-gradient(#fff 0 25%,#c0c0c0 0 50%) 0 0/2px 2px;"></div>
<div style="left:235px;top:333px;width:16px;height:16px;background:#c0c0c0;"></div>
<div style="left:235px;top:348px;width:16px;height:1px;background:#000;"></div>
<div style="left:250px;top:333px;width:1px;height:16px;background:#000;"></div>
<div style="left:236px;top:334px;width:13px;height:1px;background:#fff;"></div>
<div style="left:236px;top:334px;width:1px;height:13px;background:#fff;"></div>
<div style="left:236px;top:347px;width:14px;height:1px;background:#808080;"></div>
<div style="left:249px;top:334px;width:1px;height:14px;background:#808080;"></div>
<svg style="left:239px;top:339px" width="7" height="4"><path d="M3 0h1v1h1v1h1v1h1v1h-7v-1h1v-1h1v-1h1z" fill="#000"/></svg>
<div style="left:235px;top:349px;width:16px;height:16px;background:#c0c0c0;"></div>
<div style="left:235px;top:364px;width:16px;height:1px;background:#000;"></div>
<div style="left:250px;top:349px;width:1px;height:16px;background:#000;"></div>
<div style="left:236px;top:350px;width:13px;height:1px;background:#fff;"></div>
<div style="left:236px;top:350px;width:1px;height:13px;background:#fff;"></div>
<div style="left:236px;top:363px;width:14px;height:1px;background:#808080;"></div>
<div style="left:249px;top:350px;width:1px;height:14px;background:#808080;"></div>
<div style="left:235px;top:482px;width:16px;height:16px;background:#c0c0c0;"></div>
<div style="left:235px;top:497px;width:16px;height:1px;background:#000;"></div>
<div style="left:250px;top:482px;width:1px;height:16px;background:#000;"></div>
<div style="left:236px;top:483px;width:13px;height:1px;background:#fff;"></div>
<div style="left:236px;top:483px;width:1px;height:13px;background:#fff;"></div>
<div style="left:236px;top:496px;width:14px;height:1px;background:#808080;"></div>
<div style="left:249px;top:483px;width:1px;height:14px;background:#808080;"></div>
<svg style="left:239px;top:488px" width="7" height="4"><path d="M0 0h7v1h-1v1h-1v1h-1v1h-1v-1h-1v-1h-1v-1h-1z" fill="#000"/></svg>
<div style="left:23px;top:498px;width:196px;height:16px;background:repeating-conic-gradient(#fff 0 25%,#c0c0c0 0 50%) 0 0/2px 2px;"></div>
<div style="left:7px;top:498px;width:16px;height:16px;background:#c0c0c0;"></div>
<div style="left:7px;top:513px;width:16px;height:1px;background:#000;"></div>
<div style="left:22px;top:498px;width:1px;height:16px;background:#000;"></div>
<div style="left:8px;top:499px;width:13px;height:1px;background:#fff;"></div>
<div style="left:8px;top:499px;width:1px;height:13px;background:#fff;"></div>
<div style="left:8px;top:512px;width:14px;height:1px;background:#808080;"></div>
<div style="left:21px;top:499px;width:1px;height:14px;background:#808080;"></div>
<svg style="left:12px;top:502px" width="4" height="7"><path d="M3 0h1v7h-1v-1h-1v-1h-1v-1h-1v-1h1v-1h1v-1h1z" fill="#000"/></svg>
<div style="left:23px;top:498px;width:16px;height:16px;background:#c0c0c0;"></div>
<div style="left:23px;top:513px;width:16px;height:1px;background:#000;"></div>
<div style="left:38px;top:498px;width:1px;height:16px;background:#000;"></div>
<div style="left:24px;top:499px;width:13px;height:1px;background:#fff;"></div>
<div style="left:24px;top:499px;width:1px;height:13px;background:#fff;"></div>
<div style="left:24px;top:512px;width:14px;height:1px;background:#808080;"></div>
<div style="left:37px;top:499px;width:1px;height:14px;background:#808080;"></div>
<div style="left:219px;top:498px;width:16px;height:16px;background:#c0c0c0;"></div>
<div style="left:219px;top:513px;width:16px;height:1px;background:#000;"></div>
<div style="left:234px;top:498px;width:1px;height:16px;background:#000;"></div>
<div style="left:220px;top:499px;width:13px;height:1px;background:#fff;"></div>
<div style="left:220px;top:499px;width:1px;height:13px;background:#fff;"></div>
<div style="left:220px;top:512px;width:14px;height:1px;background:#808080;"></div>
<div style="left:233px;top:499px;width:1px;height:14px;background:#808080;"></div>
<svg style="left:225px;top:502px" width="4" height="7"><path d="M0 0h1v1h1v1h1v1h1v1h-1v1h-1v1h-1v1h-1z" fill="#000"/></svg>
<div style="left:235px;top:498px;width:16px;height:16px;background:#c0c0c0;"></div>
<div style="left:258px;top:99px;width:464px;height:1px;background:#808080;"></div>
<div style="left:258px;top:99px;width:1px;height:418px;background:#808080;"></div>
<div style="left:258px;top:516px;width:464px;height:1px;background:#808080;"></div>
<div style="left:721px;top:99px;width:1px;height:418px;background:#808080;"></div>
<div style="left:259px;top:100px;width:464px;height:1px;background:#fff;"></div>
<div style="left:259px;top:100px;width:1px;height:418px;background:#fff;"></div>
<div style="left:258px;top:517px;width:465px;height:1px;background:#fff;"></div>
<div style="left:722px;top:99px;width:1px;height:419px;background:#fff;"></div>
<div style="left:262px;top:99px;width:164px;height:2px;background:#c0c0c0;"></div>
<div class="t" style="left:263.05px;top:90px;font-size:12px;line-height:12px;color:#262626;transform:scaleX(0.9467);transform-origin:0 0;">D:\beta\r5.2\demo\beta\stack-lib</div>
<div style="left:261px;top:105px;width:459px;height:1px;background:#808080;"></div>
<div style="left:261px;top:105px;width:1px;height:410px;background:#808080;"></div>
<div style="left:262px;top:106px;width:457px;height:1px;background:#000;"></div>
<div style="left:262px;top:106px;width:1px;height:408px;background:#000;"></div>
<div style="left:261px;top:514px;width:459px;height:1px;background:#fff;"></div>
<div style="left:719px;top:105px;width:1px;height:410px;background:#fff;"></div>
<div style="left:262px;top:513px;width:457px;height:1px;background:#c0c0c0;"></div>
<div style="left:718px;top:106px;width:1px;height:408px;background:#c0c0c0;"></div>
<div style="left:263px;top:107px;width:455px;height:406px;background:#fff;"></div>
<div class="t" style="left:264.03px;top:110px;font-size:14px;line-height:14px;color:#262626;transform:scaleX(0.9730);transform-origin:0 0;">Stack:</div>
<div class="t" style="left:272.06px;top:126px;font-size:14px;line-height:14px;color:#262626;transform:scaleX(0.9400);transform-origin:0 0;">(#</div>
<div style="left:344px;top:141px;width:169px;height:16px;background:#000;"></div>
<div class="t" style="left:284.06px;top:142px;font-size:14px;line-height:14px;color:#262626;transform:scaleX(0.9365);transform-origin:0 0;">Private: @</div>
<div class="t" style="left:344.08px;top:142px;font-size:14px;line-height:14px;color:#e6e6e6;transform:scaleX(0.9227);transform-origin:0 0;">&lt;&lt;SLOT private:Descriptor&gt;&gt;</div>
<div class="t" style="left:513.06px;top:142px;font-size:14px;line-height:14px;color:#262626;transform:scaleX(0.9400);transform-origin:0 0;">;</div>
<div class="t" style="left:284.06px;top:158px;font-size:14px;line-height:14px;color:#262626;transform:scaleX(0.9400);transform-origin:0 0;">Push:</div>
<div class="t" style="left:292.08px;top:174px;font-size:14px;line-height:14px;color:#262626;transform:scaleX(0.9205);transform-origin:0 0;">(# e: @integer</div>
<div class="t" style="left:292.06px;top:190px;font-size:14px;line-height:14px;color:#262626;transform:scaleX(0.9400);transform-origin:0 0;">enter e</div>
<div class="t" style="left:292.06px;top:206px;font-size:14px;line-height:14px;color:#262626;transform:scaleX(0.9400);transform-origin:0 0;">do</div>
<div class="t" style="left:304.06px;top:222px;font-size:14px;line-height:14px;color:#262626;transform:scaleX(0.9360);transform-origin:0 0;">&lt;&lt;SLOT PushBody:Descriptor&gt;&gt;</div>
<div class="t" style="left:292.00px;top:238px;font-size:14px;line-height:14px;color:#262626;transform:scaleX(0.9400);transform-origin:0 0;">#);</div>
<div class="t" style="left:284.06px;top:254px;font-size:14px;line-height:14px;color:#262626;transform:scaleX(0.9400);transform-origin:0 0;">Pop:</div>
<div class="t" style="left:292.08px;top:270px;font-size:14px;line-height:14px;color:#262626;transform:scaleX(0.9205);transform-origin:0 0;">(# e: @integer</div>
<div class="t" style="left:292.06px;top:286px;font-size:14px;line-height:14px;color:#262626;transform:scaleX(0.9395);transform-origin:0 0;">do &lt;&lt;SLOT PopBody:Descriptor&gt;&gt;</div>
<div class="t" style="left:292.06px;top:302px;font-size:14px;line-height:14px;color:#262626;transform:scaleX(0.9400);transform-origin:0 0;">exit e</div>
<div class="t" style="left:292.00px;top:318px;font-size:14px;line-height:14px;color:#262626;transform:scaleX(0.9400);transform-origin:0 0;">#);</div>
<div class="t" style="left:284.06px;top:334px;font-size:14px;line-height:14px;color:#262626;transform:scaleX(0.9400);transform-origin:0 0;">New:</div>
<div class="t" style="left:292.06px;top:350px;font-size:14px;line-height:14px;color:#262626;transform:scaleX(0.9400);transform-origin:0 0;">(#</div>
<div class="t" style="left:292.07px;top:366px;font-size:14px;line-height:14px;color:#262626;transform:scaleX(0.9312);transform-origin:0 0;">do &lt;&lt;SLOT NewBody:Descriptor&gt;&gt;</div>
<div class="t" style="left:292.00px;top:382px;font-size:14px;line-height:14px;color:#262626;transform:scaleX(0.9400);transform-origin:0 0;">#);</div>
<div class="t" style="left:284.06px;top:398px;font-size:14px;line-height:14px;color:#262626;transform:scaleX(0.9400);transform-origin:0 0;">isEmpty:</div>
<div class="t" style="left:292.06px;top:414px;font-size:14px;line-height:14px;color:#262626;transform:scaleX(0.9400);transform-origin:0 0;">(# Result: @boolean</div>
<div class="t" style="left:292.06px;top:430px;font-size:14px;line-height:14px;color:#262626;transform:scaleX(0.9417);transform-origin:0 0;">do &lt;&lt;SLOT isEmptyBody:Descriptor&gt;&gt;</div>
<div class="t" style="left:292.06px;top:446px;font-size:14px;line-height:14px;color:#262626;transform:scaleX(0.9400);transform-origin:0 0;">exit Result</div>
<div class="t" style="left:292.00px;top:462px;font-size:14px;line-height:14px;color:#262626;transform:scaleX(0.9400);transform-origin:0 0;">#)</div>
<div class="t" style="left:272.00px;top:478px;font-size:14px;line-height:14px;color:#262626;transform:scaleX(0.9400);transform-origin:0 0;">#)</div>
<div style="left:702px;top:123px;width:16px;height:358px;background:repeating-conic-gradient(#fff 0 25%,#c0c0c0 0 50%) 0 0/2px 2px;"></div>
<div style="left:702px;top:107px;width:16px;height:16px;background:#c0c0c0;"></div>
<div style="left:702px;top:122px;width:16px;height:1px;background:#000;"></div>
<div style="left:717px;top:107px;width:1px;height:16px;background:#000;"></div>
<div style="left:703px;top:108px;width:13px;height:1px;background:#fff;"></div>
<div style="left:703px;top:108px;width:1px;height:13px;background:#fff;"></div>
<div style="left:703px;top:121px;width:14px;height:1px;background:#808080;"></div>
<div style="left:716px;top:108px;width:1px;height:14px;background:#808080;"></div>
<svg style="left:706px;top:113px" width="7" height="4"><path d="M3 0h1v1h1v1h1v1h1v1h-7v-1h1v-1h1v-1h1z" fill="#000"/></svg>
<div style="left:702px;top:123px;width:16px;height:346px;background:#c0c0c0;"></div>
<div style="left:702px;top:468px;width:16px;height:1px;background:#000;"></div>
<div style="left:717px;top:123px;width:1px;height:346px;background:#000;"></div>
<div style="left:703px;top:124px;width:13px;height:1px;background:#fff;"></div>
<div style="left:703px;top:124px;width:1px;height:343px;background:#fff;"></div>
<div style="left:703px;top:467px;width:14px;height:1px;background:#808080;"></div>
<div style="left:716px;top:124px;width:1px;height:344px;background:#808080;"></div>
<div style="left:702px;top:481px;width:16px;height:16px;background:#c0c0c0;"></div>
<div style="left:702px;top:496px;width:16px;height:1px;background:#000;"></div>
<div style="left:717px;top:481px;width:1px;height:16px;background:#000;"></div>
<div style="left:703px;top:482px;width:13px;height:1px;background:#fff;"></div>
<div style="left:703px;top:482px;width:1px;height:13px;background:#fff;"></div>
<div style="left:703px;top:495px;width:14px;height:1px;background:#808080;"></div>
<div style="left:716px;top:482px;width:1px;height:14px;background:#808080;"></div>
<svg style="left:706px;top:487px" width="7" height="4"><path d="M0 0h7v1h-1v1h-1v1h-1v1h-1v-1h-1v-1h-1v-1h-1z" fill="#000"/></svg>
<div style="left:279px;top:497px;width:407px;height:16px;background:repeating-conic-gradient(#fff 0 25%,#c0c0c0 0 50%) 0 0/2px 2px;"></div>
<div style="left:263px;top:497px;width:16px;height:16px;background:#c0c0c0;"></div>
<div style="left:263px;top:512px;width:16px;height:1px;background:#000;"></div>
<div style="left:278px;top:497px;width:1px;height:16px;background:#000;"></div>
<div style="left:264px;top:498px;width:13px;height:1px;background:#fff;"></div>
<div style="left:264px;top:498px;width:1px;height:13px;background:#fff;"></div>
<div style="left:264px;top:511px;width:14px;height:1px;background:#808080;"></div>
<div style="left:277px;top:498px;width:1px;height:14px;background:#808080;"></div>
<svg style="left:268px;top:501px" width="5" height="8"><path d="M4 1h1v7h-1v-1h-1v-1h-1v-1h-1v-1h1v-1h1v-1h1z" fill="#fff"/><path d="M3 0h1v7h-1v-1h-1v-1h-1v-1h-1v-1h1v-1h1v-1h1z" fill="#808080"/></svg>
<div style="left:686px;top:497px;width:16px;height:16px;background:#c0c0c0;"></div>
<div style="left:686px;top:512px;width:16px;height:1px;background:#000;"></div>
<div style="left:701px;top:497px;width:1px;height:16px;background:#000;"></div>
<div style="left:687px;top:498px;width:13px;height:1px;background:#fff;"></div>
<div style="left:687px;top:498px;width:1px;height:13px;background:#fff;"></div>
<div style="left:687px;top:511px;width:14px;height:1px;background:#808080;"></div>
<div style="left:700px;top:498px;width:1px;height:14px;background:#808080;"></div>
<svg style="left:692px;top:501px" width="5" height="8"><path d="M1 1v7h1v-1h1v-1h1v-1h1v-1h-1v-1h-1v-1h-1v-1z" fill="#fff"/><path d="M0 0v7h1v-1h1v-1h1v-1h1v-1h-1v-1h-1v-1h-1v-1z" fill="#808080"/></svg>
<div style="left:702px;top:497px;width:16px;height:16px;background:#c0c0c0;"></div>
<div style="left:4px;top:532px;width:719px;height:1px;background:#808080;"></div>
<div style="left:4px;top:532px;width:1px;height:34px;background:#808080;"></div>
<div style="left:4px;top:565px;width:719px;height:1px;background:#808080;"></div>
<div style="left:722px;top:532px;width:1px;height:34px;background:#808080;"></div>
<div style="left:5px;top:533px;width:719px;height:1px;background:#fff;"></div>
<div style="left:5px;top:533px;width:1px;height:34px;background:#fff;"></div>
<div style="left:4px;top:566px;width:720px;height:1px;background:#fff;"></div>
<div style="left:723px;top:532px;width:1px;height:35px;background:#fff;"></div>
<div style="left:9px;top:532px;width:196px;height:2px;background:#c0c0c0;"></div>
<div class="t" style="left:9.05px;top:523px;font-size:12px;line-height:12px;color:#262626;transform:scaleX(0.9463);transform-origin:0 0;">Location: D:\beta\r5.2\demo\beta/stack</div>
<div class="t" style="left:7.10px;top:539px;font-size:12px;line-height:12px;color:#262626;transform:scaleX(0.9048);transform-origin:0 0;">Info:</div>
<div style="left:707px;top:522px;width:13px;height:16px;background:#c0c0c0;"></div>
<div style="left:707px;top:522px;width:13px;height:1px;background:#808080;"></div>
<div style="left:707px;top:522px;width:1px;height:16px;background:#808080;"></div>
<div style="left:707px;top:537px;width:13px;height:1px;background:#808080;"></div>
<div style="left:719px;top:522px;width:1px;height:16px;background:#808080;"></div>
<div style="left:708px;top:523px;width:12px;height:1px;background:#fff;"></div>
<div style="left:708px;top:523px;width:1px;height:14px;background:#fff;"></div>
<div style="left:720px;top:522px;width:1px;height:16px;background:#fff;"></div>
<div class="t" style="left:710.00px;top:525px;font-size:12px;line-height:12px;color:#262626;">c</div>
</body></html>
